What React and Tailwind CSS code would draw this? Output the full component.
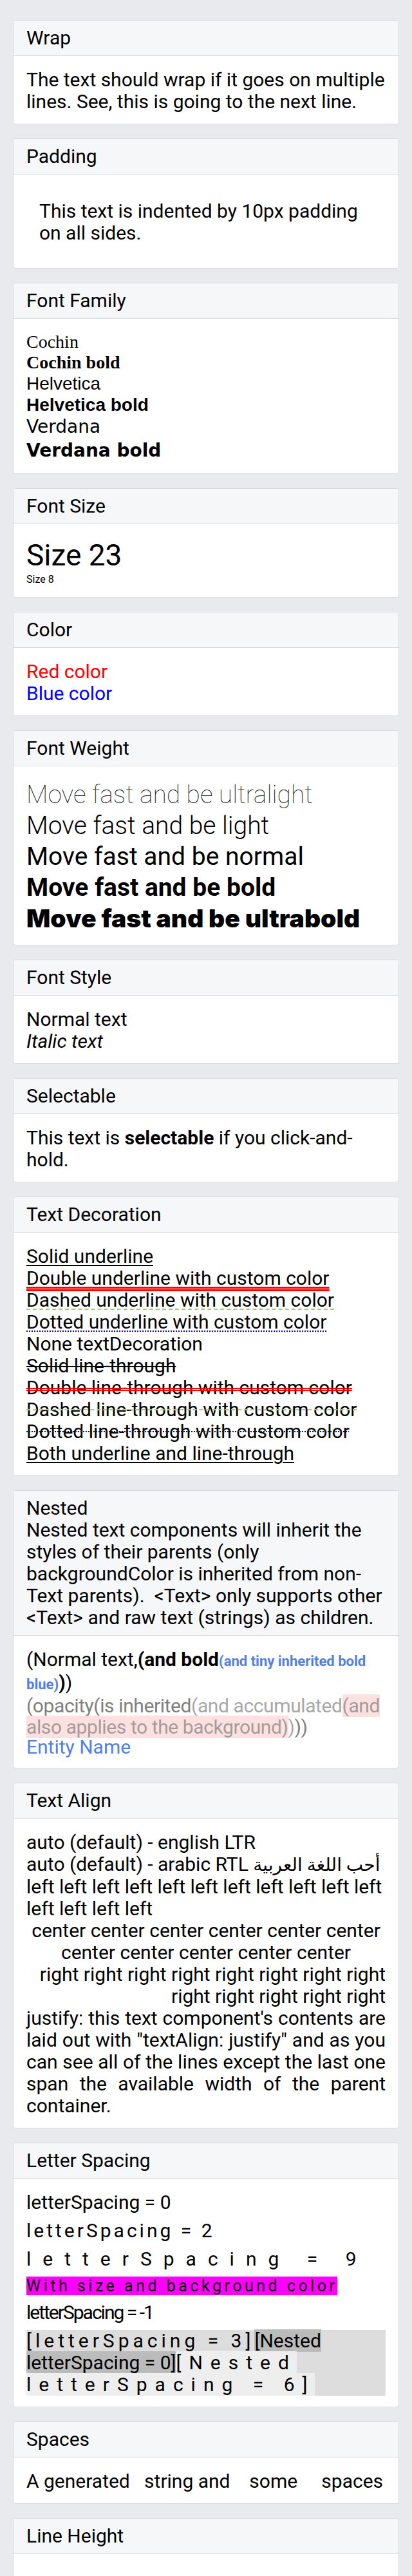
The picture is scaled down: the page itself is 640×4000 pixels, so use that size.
import React from 'react';

// Example cards for the Text component, drawn at 2x of the RN sizes
const Card = ({ title, description, children, bodyClass = '' }) => (
    <div className="mx-5 rounded-[4px] border border-[#d9dadd] bg-white overflow-hidden">
        <div className="bg-[#f6f7f8] border-b border-[#d9dadd] px-5 py-[10px] leading-[34px]">
            <div>{title}</div>
            {description && <div className="whitespace-pre-wrap">{description}</div>}
        </div>
        <div className={`px-5 pt-5 pb-[17px] leading-[34px] ${bodyClass}`}>{children}</div>
    </div>
);

const decorations = [
    ['Solid underline', 'underline decoration-black decoration-2'],
    ['Double underline with custom color', 'underline decoration-double decoration-[#ff0000]'],
    ['Dashed underline with custom color', 'underline decoration-dashed decoration-[#9cdc40] decoration-2'],
    ['Dotted underline with custom color', 'underline decoration-dotted decoration-[#0000ff] decoration-2'],
    ['None textDecoration', ''],
    ['Solid line-through', 'line-through decoration-black decoration-2'],
    ['Double line-through with custom color', 'line-through decoration-double decoration-[#ff0000] decoration-2'],
    ['Dashed line-through with custom color', 'line-through decoration-dashed decoration-[#9cdc40] decoration-2'],
    ['Dotted line-through with custom color', 'line-through decoration-dotted decoration-[#0000ff] decoration-2'],
    ['Both underline and line-through', 'underline line-through decoration-black decoration-2'],
];

const App = () => {
    return (
        <div className="min-h-[4000px] bg-[#e9eaed] pt-[31px] pb-10 flex flex-col gap-[22px] text-[30px] text-black font-['Roboto','DejaVu_Sans',sans-serif]">
            <Card title="Wrap">
                The text should wrap if it goes on multiple lines. See, this is going to the next line.
            </Card>

            <Card title="Padding">
                <div className="py-5 pl-5 pr-6">This text is indented by 10px padding on all sides.</div>
            </Card>

            <Card title="Font Family" bodyClass="text-[28px]">
                <div className="font-['Liberation_Serif',serif] leading-[32px]">Cochin</div>
                <div className="font-['Liberation_Serif',serif] font-bold leading-[32px]">Cochin bold</div>
                <div className="font-['Liberation_Sans',sans-serif] leading-[33px]">Helvetica</div>
                <div className="font-['Liberation_Sans',sans-serif] font-bold leading-[33px]">Helvetica bold</div>
                <div className="font-['DejaVu_Sans',sans-serif] leading-[36px]">Verdana</div>
                <div className="font-['DejaVu_Sans',sans-serif] font-bold leading-[37px]">Verdana bold</div>
            </Card>

            <Card title="Font Size">
                <div className="text-[46px] leading-[56px]">Size 23</div>
                <div className="text-[16px] leading-[20px]">Size 8</div>
            </Card>

            <Card title="Color">
                <div className="text-[#ff0000]">Red color</div>
                <div className="text-[#0000ff]">Blue color</div>
            </Card>

            <Card title="Font Weight" bodyClass="text-[39px] !leading-[48px] whitespace-nowrap">
                <div className="font-thin text-[#222]">Move fast and be ultralight</div>
                <div className="font-light">Move fast and be light</div>
                <div className="font-normal">Move fast and be normal</div>
                <div className="font-bold">Move fast and be bold</div>
                <div className="font-black font-['Inter','Roboto',sans-serif]">Move fast and be ultrabold</div>
            </Card>

            <Card title="Font Style">
                <div>Normal text</div>
                <div className="italic">Italic text</div>
            </Card>

            <Card title="Selectable">
                This text is <span className="font-bold">selectable</span> if you click-and-hold.
            </Card>

            <Card title="Text Decoration">
                {decorations.map(([label, cls]) => (
                    <div key={label}>
                        <span className={`${cls} underline-offset-[3px]`}>{label}</span>
                    </div>
                ))}
            </Card>

            <Card
                title="Nested"
                description="Nested text components will inherit the styles of their parents (only backgroundColor is inherited from non-Text parents).  <Text> only supports other <Text> and raw text (strings) as children."
            >
                <div className="leading-[33px]">
                    (Normal text,
                    <span className="font-bold">
                        (and bold
                        <span className="text-[22px] text-[#527fe4]">(and tiny inherited bold blue)</span>)
                    </span>
                    )
                </div>
                <div className="leading-[33px] tracking-[-0.4px] text-[#808080]">
                    (opacity(is inherited
                    <span className="text-[#a8a8a8]">
                        (and accumulated
                        <span className="bg-[#fde1e1] text-[#a59b9b]">(and also applies to the background)</span>)
                    </span>
                    ))
                </div>
                <div className="leading-[30px] text-[#527fe4]">Entity Name</div>
            </Card>

            <Card title="Text Align">
                <div>auto (default) - english LTR</div>
                <div className="whitespace-nowrap">
                    auto (default) - arabic RTL <span className="text-[28px]">أحب اللغة العربية</span>
                </div>
                <div className="text-left">left left left left left left left left left left left left left left left</div>
                <div className="text-center">center center center center center center center center center center center</div>
                <div className="text-right">right right right right right right right right right right right right right</div>
                <div className="text-justify">
                    justify: this text component's contents are laid out with "textAlign: justify" and as you can see all of the lines except the last one span the available width of the parent container.
                </div>
            </Card>

            <Card title="Letter Spacing">
                <div className="flex flex-col items-start gap-[10px]">
                    <div className="tracking-[0px]">letterSpacing = 0</div>
                    <div className="tracking-[4px]">letterSpacing = 2</div>
                    <div className="tracking-[18px]">letterSpacing = 9</div>
                    <div className="text-[25px] leading-[29px] tracking-[4.5px] bg-[#ff00ff]">With size and background color</div>
                    <div className="tracking-[-2px]">letterSpacing = -1</div>
                    <div className="self-stretch tracking-[6px] bg-[#dddddd]">
                        [letterSpacing = 3]
                        <span className="tracking-[0px] bg-[#bbbbbb]">[Nested letterSpacing = 0]</span>
                        <span className="tracking-[12px] bg-[#eeeeee]">[Nested letterSpacing = 6]</span>
                    </div>
                </div>
            </Card>

            <Card title="Spaces">
                <div className="whitespace-pre">{'A generated   string and    some     spaces'}</div>
            </Card>

            <Card title="Line Height">
                <div className="pt-[60px] leading-[70px]">
                    A lot of space between the lines of this long passage that should wrap once.
                </div>
            </Card>
        </div>
    );
};

export default App;
